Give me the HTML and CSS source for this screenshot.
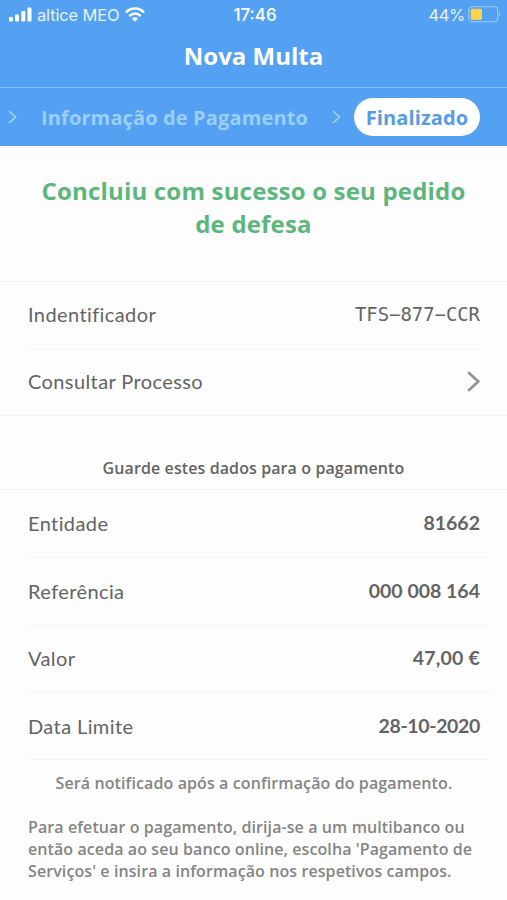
FILE: index.html
```html
<!DOCTYPE html>
<html lang="pt">
<head>
<meta charset="utf-8">
<title>Nova Multa</title>
<link rel="stylesheet" href="styles.css">
</head>
<body>
<header class="top">
  <div class="status">
    <div class="carrier">
      <svg class="signal" width="23" height="15" viewBox="0 0 23 15" fill="#fff"><rect x="0" y="10" width="4" height="4.5" rx="1"/><rect x="6" y="7.5" width="4" height="7" rx="1"/><rect x="12.3" y="4" width="4" height="10.5" rx="1"/><rect x="18.5" y="0.5" width="4" height="14" rx="1"/></svg>
      <span class="operator">altice MEO</span>
      <svg class="wifi" width="20" height="15" viewBox="0 0 20 15" fill="none" stroke="#fff" stroke-width="2.5"><path d="M1 5.3C6 .2 14 .2 19 5.3"/><path d="M4.3 9C7.6 5.8 12.4 5.8 15.7 9"/><path d="M6.9 11.5Q10 8.9 13.1 11.5L10 14.7Z" fill="#fff" stroke="none"/></svg>
    </div>
    <span class="clock">17:46</span>
    <div class="power">
      <span class="percent">44%</span>
      <svg width="33" height="17" viewBox="0 0 33 17"><rect x=".7" y=".7" width="29" height="15" rx="3.5" fill="none" stroke="#9acaf8" stroke-width="1.1"/><rect x="2.7" y="2.7" width="11.3" height="11" rx="1.5" fill="#fbd34d"/><path d="M31 5.7Q33.4 8.2 31 10.7Z" fill="#9acaf8"/></svg>
    </div>
  </div>
  <h1 class="title">Nova Multa</h1>
  <nav class="steps">
    <svg class="sep" width="9" height="14" viewBox="0 0 9 14"><path d="M1 1L7.5 7L1 13"/></svg>
    <span class="step">Informação de Pagamento</span>
    <svg class="sep" width="9" height="14" viewBox="0 0 9 14"><path d="M1 1L7.5 7L1 13"/></svg>
    <span class="active">Finalizado</span>
  </nav>
</header>
<main>
  <h2 class="success">Concluiu com sucesso o seu pedido<br>de defesa</h2>
  <section class="group process">
    <div class="row"><span class="label">Indentificador</span><span class="code">TFS−877−CCR</span></div>
    <div class="row"><span class="label">Consultar Processo</span><svg class="go" width="14" height="21" viewBox="0 0 14 21"><path d="M3 2L12.3 10.5L3 19"/></svg></div>
  </section>
  <p class="keep">Guarde estes dados para o pagamento</p>
  <section class="group payment">
    <div class="row"><span class="label">Entidade</span><span class="value">81662</span></div>
    <div class="row"><span class="label">Referência</span><span class="value">000 008 164</span></div>
    <div class="row"><span class="label">Valor</span><span class="value amount">47,00 €</span></div>
    <div class="row"><span class="label">Data Limite</span><span class="value date">28-10-2020</span></div>
  </section>
  <p class="notice">Será notificado após a confirmação do pagamento.</p>
  <p class="help">Para efetuar o pagamento, dirija-se a um multibanco ou<br>então aceda ao seu banco online, escolha 'Pagamento de<br>Serviços' e insira a informação nos respetivos campos.</p>
</main>
</body>
</html>
```
FILE: styles.css
```css
* { box-sizing: border-box; }
body {
  margin: 0;
  width: 507px;
  height: 900px;
  overflow: hidden;
  background: #fdfdfd;
  font-family: "Open Sans", sans-serif;
  color: #646464;
}
h1, h2, p { margin: 0; }
svg { display: block; flex: none; }
.top { height: 146px; background: #54a1f3; color: #fff; }
.status {
  height: 28px;
  display: grid;
  grid-template-columns: 1fr auto 1fr;
  align-items: center;
  padding: 0 6px 0 9px;
  font: 16.5px/20px Inter, sans-serif;
}
.carrier, .power { display: flex; align-items: center; }
.signal { margin-right: 5px; }
.operator { width: 83px; padding-top: 1px; white-space: nowrap; color: #e7f3ff; letter-spacing: -.15px; }
.wifi { margin-left: 5px; }
.clock { padding-top: 1px; font-weight: 500; font-size: 17px; letter-spacing: 0; }
.power { justify-content: flex-end; gap: 3px; }
.percent { padding-top: 1px; color: #e7f3ff; letter-spacing: -.3px; }
.title {
  height: 60px;
  border-bottom: 1px solid #82bbf7;
  text-align: center;
  font-size: 24px;
  font-weight: 700;
  line-height: 56px;
}
.steps { height: 58px; display: flex; align-items: center; padding-left: 8px; }
.sep path { fill: none; stroke: #a5d5fb; stroke-width: 1.6; }
.step {
  width: 268px;
  margin: 0 23px 0 24px;
  white-space: nowrap;
  font-size: 20px;
  font-weight: 700;
  letter-spacing: .13px;
  color: #9acffb;
}
.active {
  width: 126px;
  height: 38px;
  margin-left: 13px;
  border-radius: 19px;
  background: #fff;
  color: #559ce5;
  font-size: 20px;
  font-weight: 700;
  letter-spacing: .1px;
  line-height: 39px;
  text-align: center;
}
.success {
  height: 135px;
  padding-top: 28px;
  text-align: center;
  font-size: 24px;
  font-weight: 700;
  letter-spacing: .18px;
  line-height: 33px;
  color: #5bb77c;
}
.group { border-top: 1px solid #f2f2f2; }
.row {
  height: 67.5px;
  margin-left: 28px;
  padding-bottom: 1px;
  display: flex;
  justify-content: space-between;
  align-items: center;
}
.row + .row { border-top: 1px solid #f4f4f4; }
.process { height: 135px; border-bottom: 1px solid #f2f2f2; }
.process .row { height: 67px; margin-right: 27px; padding-bottom: 3px; }
.process .row + .row { padding-bottom: 3px; }
.payment .row { margin-right: 17px; padding-right: 10px; }
.payment .row:first-child { height: 67px; }
.label { font: 20px/28px Lato, sans-serif; letter-spacing: .4px; }
.value { font: 700 19.5px/28px Lato, sans-serif; letter-spacing: 0; }
.amount { letter-spacing: .2px; }
.date { letter-spacing: -.35px; }
.code { font: 18.9px/28px "DejaVu Sans Mono", monospace; }
.go path { fill: none; stroke: #929292; stroke-width: 2.6; stroke-linecap: round; }
.process .row:first-child { height: 66.5px; }
.keep {
  height: 73px;
  padding-top: 41px;
  text-align: center;
  font-size: 16px;
  font-weight: 600;
  letter-spacing: .1px;
  line-height: 22px;
}
.payment { height: 270px; }
.notice {
  margin: 0 17px 0 28px;
  height: 47px;
  border-top: 1px solid #f4f4f4;
  padding: 12px 10px 0 0;
  text-align: center;
  font-size: 16px;
  font-weight: 600;
  letter-spacing: .1px;
  line-height: 22px;
  color: #858585;
}
.help {
  margin: 10px 0 0 28px;
  white-space: nowrap;
  font-size: 16px;
  font-weight: 600;
  letter-spacing: .09px;
  line-height: 22px;
  color: #858585;
}
```
